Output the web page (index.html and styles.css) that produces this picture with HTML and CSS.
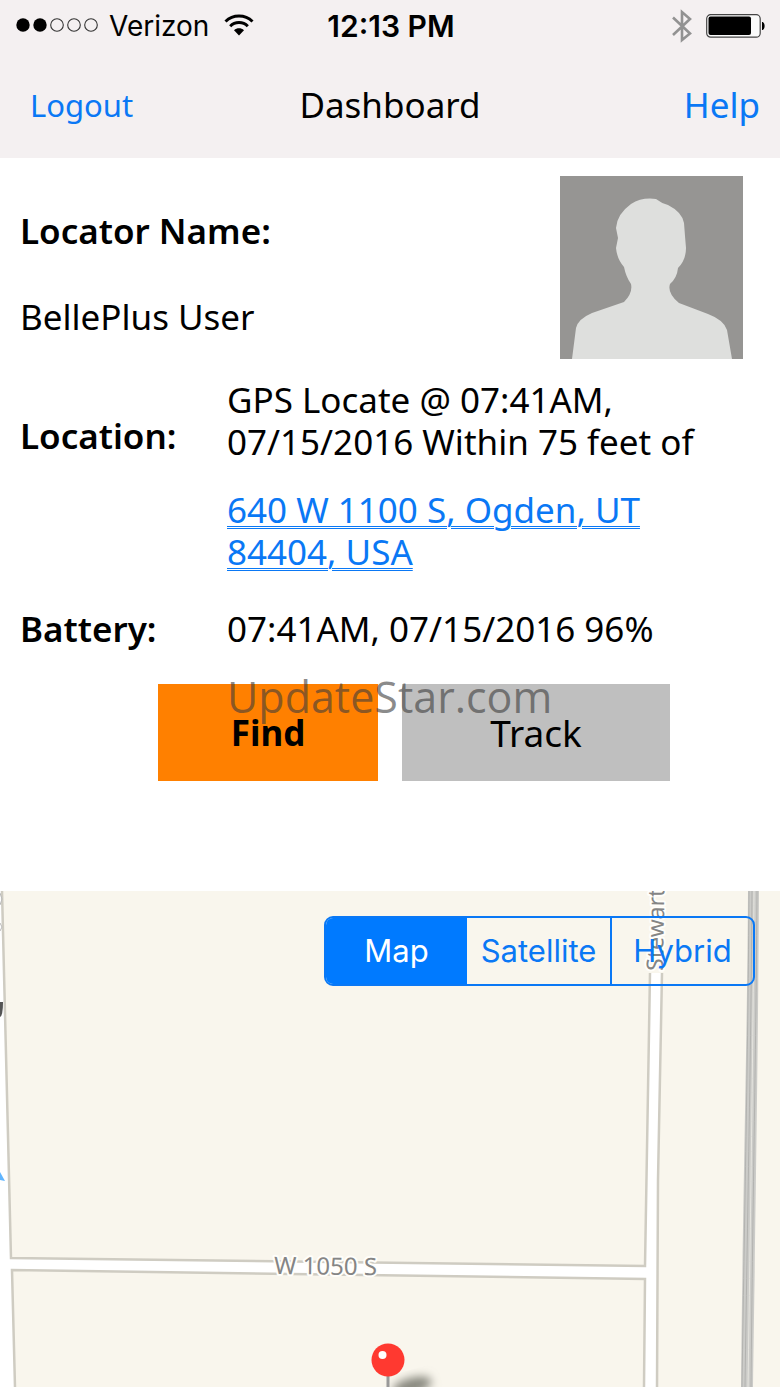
FILE: index.html
```html
<!DOCTYPE html>
<html lang="en">
<head>
<meta charset="utf-8">
<meta name="viewport" content="width=device-width, initial-scale=1">
<title>Dashboard</title>
<link rel="stylesheet" href="styles.css">
</head>
<body>
<header class="top">
  <div class="status">
    <div class="carrier">
      <svg class="signal" width="82" height="16" viewBox="0 0 82 16" aria-hidden="true">
        <circle cx="7" cy="8" r="6.7"/><circle cx="24" cy="8" r="6.7"/>
        <g fill="none" stroke="#333" stroke-width="1.1"><circle cx="41" cy="8" r="6.3"/><circle cx="58" cy="8" r="6.3"/><circle cx="75" cy="8" r="6.3"/></g>
      </svg>
      <span>Verizon</span>
      <svg width="30" height="22" viewBox="0 0 30 22" aria-hidden="true">
        <g fill="none" stroke="#000" stroke-width="3"><path d="M1.5 7.5C9 .2 21 .2 28.500 7.500"/><path d="M6.200 12.200C11 7.400 19 7.400 23.800 12.200"/></g>
        <path d="M10 16.300C13 13.700 17 13.700 20 16.300L15 21.500Z"/>
      </svg>
    </div>
    <time class="clock">12:13 PM</time>
    <div class="indicators">
      <svg width="20" height="34" viewBox="0 0 20 34" fill="none" stroke="#929292" stroke-width="2.600" aria-hidden="true"><path d="M1 8.500L18 24.500L10 31V3L18 10L1 26"/></svg>
      <svg width="60" height="24" viewBox="0 0 60 24" aria-hidden="true">
        <rect x="0.700" y="0.700" width="53.500" height="22.500" rx="4" fill="#fafafa" stroke="#444" stroke-width="1.200"/>
        <rect x="2.500" y="2.500" width="42.500" height="18.500" rx="2"/>
        <path d="M56 8C59.500 8 59.500 16 56 16Z"/>
      </svg>
    </div>
  </div>
  <nav class="nav">
    <a class="nav-link logout" href="#logout">Logout</a>
    <h1 class="title">Dashboard</h1>
    <a class="nav-link help" href="#help">Help</a>
  </nav>
</header>

<main class="panel">
  <section class="profile">
    <dl class="name">
      <dt>Locator Name:</dt>
      <dd>BellePlus User</dd>
    </dl>
    <svg class="avatar" viewBox="0 0 183 183" role="img" aria-label="Profile picture">
      <rect width="183" height="183" fill="#969593"/>
      <path d="M12 183L16 152Q18 143 32 137L64 126Q73 117 71 108Q66 101 64 91Q57 83 56 72L58 62L56 52Q57 38 71 28Q82 21 96 23Q101 27 108 29Q122 36 124 47L125 60L126 72Q126 84 118 92Q117 102 110 108Q107 117 119 127L148 138Q164 144 167 154L172 183Z" fill="#dedfdd"/>
    </svg>
  </section>
  <dl class="details">
    <dt class="location-label">Location:</dt>
    <dd>
      <p class="fix">GPS Locate @ 07:41AM,<br>07/15/2016 Within 75 feet of</p>
      <a class="address" href="#address">640 W 1100 S, Ogden, UT<br>84404, USA</a>
    </dd>
    <dt>Battery:</dt>
    <dd>07:41AM, 07/15/2016 96%</dd>
  </dl>
  <div class="actions">
    <button class="action find" type="button">Find</button>
    <button class="action track" type="button">Track</button>
    <span class="watermark">UpdateStar.com</span>
  </div>
</main>

<section class="map" aria-label="Map">
  <svg class="map-canvas" viewBox="0 0 780 496" preserveAspectRatio="xMinYMin slice" aria-hidden="true">
    <defs><filter id="soft" x="-50%" y="-50%" width="200%" height="200%"><feGaussianBlur stdDeviation="5"/></filter></defs>
    <rect width="780" height="496" fill="#f9f6ed"/>
    <path d="M0 0H2L11 367L645 375L650 82H662L658 289L657 496H644L645 388L12 379L15 496H0Z" fill="#fff"/>
    <g fill="none" stroke="#cfccc2" stroke-width="2.500">
      <path d="M2 0L11 367L645 375L650 82"/>
      <path d="M15 496L12 379L645 388L644 496"/>
      <path d="M662 82L658 289L657 496"/>
    </g>
    <path d="M748 0H759C758 160 756 290 753 496H741C743 290 747 160 748 0Z" fill="#cbcbc8"/>
    <g fill="none" stroke="#b3b3b0"><path d="M749 0C748 160 745 290 742 496"/><path d="M752 0C751 160 748 290 745 496"/><path d="M757 0C756 160 753 290 751 496"/></g>
    <path d="M754 0C753 160 751 290 748 496" fill="none" stroke="#e6e5df"/>
    <path d="M0 111H3Q3 125 0 126Z" fill="#555"/>
    <path d="M0 2L2 8L0 14M0 32L2 36L0 40" stroke="#bbb" fill="none"/>
    <path d="M0 281L5 290L0 289Z" fill="#60b5ff"/>
    <g class="road-names">
      <text x="274" y="383" font-size="24" transform="rotate(0.700 274 383)">W 1050 S</text>
      <text x="663" y="80" font-size="23" transform="rotate(-89 663 80)">Stewart</text>
    </g>
    <ellipse cx="412" cy="495" rx="20" ry="8" fill="#85857b" filter="url(#soft)" transform="rotate(-15 412 495)"/>
    <path d="M388 480V496" stroke="#999" stroke-width="3"/>
    <circle cx="388" cy="469" r="16.500" fill="#ff3930"/>
    <circle cx="382.500" cy="464" r="4" fill="#fff"/>
  </svg>
  <div class="segments" role="group" aria-label="Map type">
    <button class="segment selected" type="button" aria-pressed="true">Map</button>
    <button class="segment" type="button" aria-pressed="false">Satellite</button>
    <button class="segment" type="button" aria-pressed="false">Hybrid</button>
  </div>
</section>
</body>
</html>
```
FILE: styles.css
```css
* { box-sizing: border-box; }

body {
  margin: 0;
  min-height: 100vh;
  display: flex;
  flex-direction: column;
  background: #fff;
  color: #000;
  font-family: "Trebuchet MS", "Noto Sans", sans-serif;
  font-size: 35px;
  line-height: 42px;
}

h1, dl, dd, p { margin: 0; }

.top { background: #f4f0f1; }

.status, .nav {
  display: grid;
  grid-template-columns: 1fr auto 1fr;
  align-items: center;
}

.status {
  height: 52px;
  padding: 0 14px 0 16px;
  font-family: Inter, sans-serif;
  font-size: 28px;
}

.carrier { display: flex; align-items: center; gap: 11px; }
.carrier svg { margin-bottom: 2px; }
.carrier svg:last-child { margin-left: 4px; }
.clock { font-size: 30px; font-weight: 600; }
.indicators { display: flex; align-items: center; justify-content: flex-end; gap: 14px; }

.nav { height: 106px; padding: 0 20px; }
.nav-link { color: #0a78f5; font-size: 31px; text-decoration: none; }
.logout { padding-left: 10px; }
.help { font-size: 35px; text-align: right; }
.title { font-size: 35px; font-weight: 400; }

.panel { padding: 18px 20px 110px; }

.profile {
  display: flex;
  justify-content: space-between;
  padding-right: 17px;
}

.name { display: grid; gap: 44px; padding-top: 34px; align-content: start; }
dt { font-weight: 600; }
.avatar { width: 183px; height: 183px; }

.details {
  display: grid;
  grid-template-columns: 207px 1fr;
  row-gap: 35px;
  margin-top: 20px;
}

.location-label { padding-top: 36px; }
.fix { margin-bottom: 26px; }

.address {
  color: #0a78f5;
  text-decoration: underline double 1px;
  text-underline-offset: 3px;
}

.actions {
  position: relative;
  display: grid;
  grid-template-columns: 220fr 268fr;
  gap: 24px;
  margin: 34px 90px 0 138px;
}

.action {
  height: 97px;
  padding: 0;
  border: 0;
  color: #000;
  font: inherit;
}

.find { background: #ff8000; font-weight: 700; }
.track { background: #bfbfbf; font-size: 37px; }

.watermark {
  position: absolute;
  left: 69px;
  top: -8px;
  color: rgba(60, 60, 60, 0.6);
  font-family: "Open Sans", sans-serif;
  font-size: 43px;
  pointer-events: none;
}

.map {
  position: relative;
  flex: 1;
  min-height: 480px;
  padding: 25px;
  overflow: hidden;
}

.map-canvas {
  position: absolute;
  inset: 0;
  width: 100%;
  height: 100%;
}

.road-names {
  fill: #858585;
  stroke: #fffefa;
  stroke-width: 4px;
  stroke-linejoin: round;
  paint-order: stroke;
  font-family: "Noto Sans", sans-serif;
}

.segments {
  position: relative;
  display: grid;
  grid-template-columns: 141px 1fr 1fr;
  width: 431px;
  height: 70px;
  margin-left: auto;
  border: 2px solid #0a78f5;
  border-radius: 9px;
  overflow: hidden;
}

.segment {
  padding: 0;
  border: 0;
  background: transparent;
  color: #0a78f5;
  font: 400 31px/42px Inter, sans-serif;
}

.segment:last-child { border-left: 2px solid #0a78f5; }
.segment.selected { background: #007aff; color: #fff; }
```
